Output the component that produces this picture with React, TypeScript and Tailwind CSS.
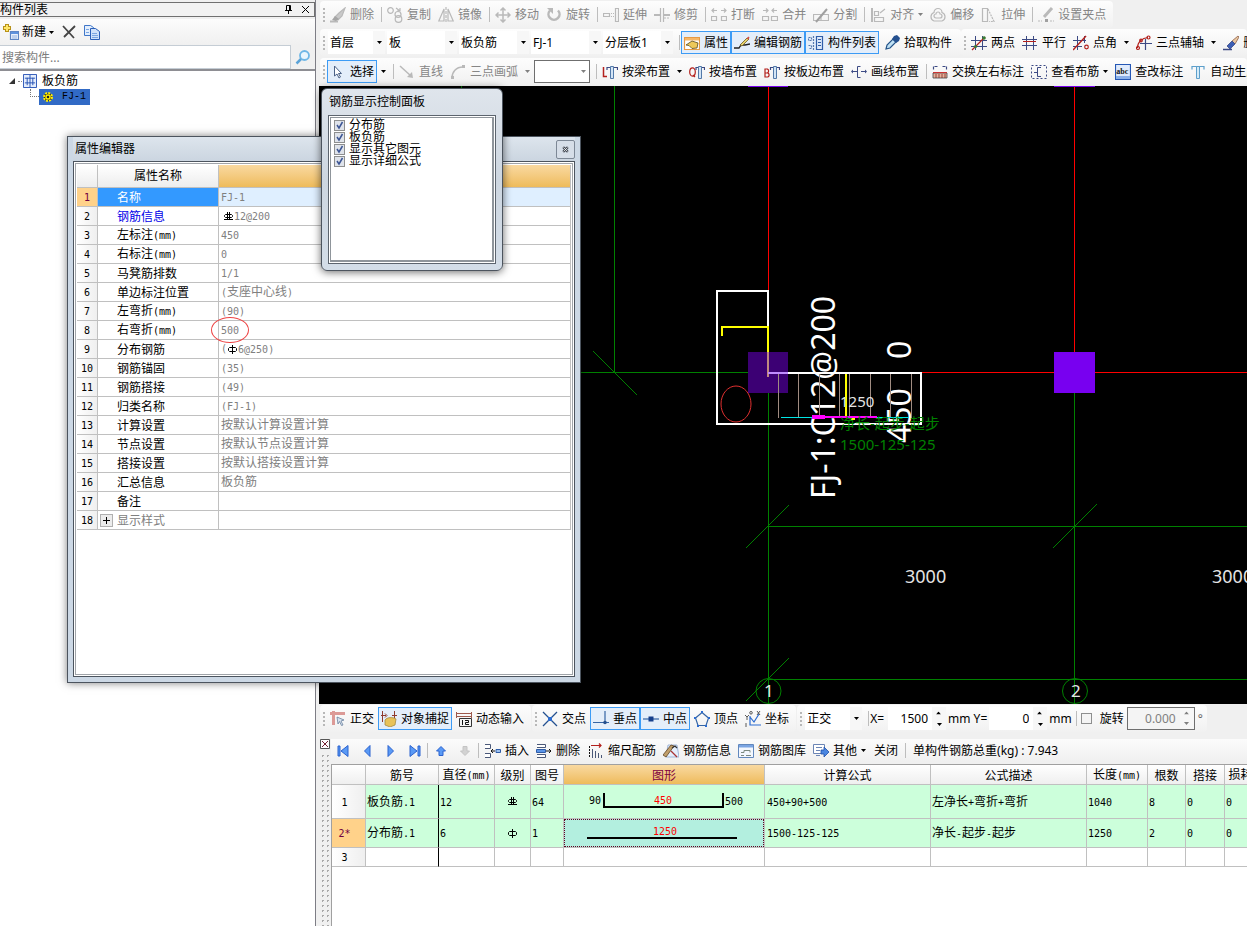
import React, { useState } from "react";

/* ---------- text helpers ---------- */

function Mixed({ text }: { text: string }) {
  const parts = text.split(/([\x20-\x7e]+)/).filter(Boolean);
  return (
    <>
      {parts.map((p, i) =>
        /^[\x20-\x7e]+$/.test(p) ? (
          <span key={i} className="font-['DejaVu_Sans_Mono',monospace] text-[10px]">{p}</span>
        ) : (
          <React.Fragment key={i}>{p}</React.Fragment>
        )
      )}
    </>
  );
}

function Rebar({ level }: { level: 1 | 3 }) {
  return (
    <svg width="11" height="11" viewBox="0 0 11 11" fill="none" stroke="#000" className="inline-block shrink-0" role="img" aria-label={level === 1 ? "一级钢" : "三级钢"}>
      {level === 1 ? (
        <path d="M2.500 3.500h6l1 1v2l-1 1h-6l-1-1v-2zM5.500 1v9" />
      ) : (
        <path d="M2.500 3.500h6l1 1v1l-1 1h-6l-1-1v-1zM4.500 1v8M6.500 1v8M1 8.500h9" />
      )}
    </svg>
  );
}

/* ---------- icons ---------- */

function I({ children, size = 16 }: { children: React.ReactNode; size?: number }) {
  return (
    <svg width={size} height={size} viewBox="0 0 16 16" fill="none" strokeWidth="1.2" className="shrink-0" aria-hidden="true">
      {children}
    </svg>
  );
}

const G = "#b9b9b9";
const B = "#2f5da8";
const N = "#3c4a84";
const R = "#b3201c";

const ic = {
  erase: <I><path d="M0 14.500h8" stroke={G} strokeWidth="2" /><path d="M15 1L9 6l-4 4 3 3 4-4z" fill="#c9c9c9" stroke={G} /><path d="M5 9l-3 4 4 1 3-2z" fill="#a5a5a5" /></I>,
  copy: <I><circle cx="3.500" cy="3.500" r="2.800" stroke={G} /><circle cx="11" cy="7.500" r="3" stroke={G} /><circle cx="11.500" cy="12" r="3.300" stroke={G} /><path d="M9 1l4 3M13 1v3h-3" stroke={G} /></I>,
  mirror: <I><path d="M6 2v12H0.800zM10 2v12h5.200z" stroke={G} /><path d="M8 0v16" stroke={G} strokeDasharray="3 1" /></I>,
  move: <I><path d="M8 1v14M1 8h14M5.500 3.500L8 1l2.500 2.500M5.500 12.500L8 15l2.500-2.500M3.500 5.500L1 8l2.500 2.500M12.500 5.500L15 8l-2.500 2.500" stroke={G} strokeWidth="1.500" /></I>,
  rotate: <I><path d="M4 3.500a5.500 5.500 0 1 0 8 0" stroke={G} strokeWidth="2.500" /><path d="M1 1h6v6z" fill={G} /></I>,
  extend: <I><path d="M.500 6.500h6v3h-6z" stroke={G} /><path d="M8 6.500h3M8 9.500h3" stroke={G} strokeDasharray="1 1" /><path d="M12.500 1.500h3v13h-3z" stroke={G} /></I>,
  trim: <I><path d="M0 8h6M10 8h6" stroke={G} strokeWidth="2" /><path d="M6.500 1v14M9.500 1v14" stroke={G} /><path d="M10 11h6" stroke={G} strokeDasharray="2 1" /></I>,
  brk: <I><path d="M1 3.500h5M3 1.500l-2 2 2 2M10 3.500h5M13 1.500l2 2-2 2M.500 9.500h5v4h-5zM10.500 9.500h5v4h-5z" stroke={G} /></I>,
  join: <I><path d="M1 3.500h5M4 1.500l2 2-2 2M15 3.500h-5M12 1.500l-2 2 2 2M.500 9.500h6v4h-6zM9.500 9.500h6v4h-6z" stroke={G} /></I>,
  split: <I><path d="M.500 7.500h15v6H.500zM8 7v6" stroke={G} /><path d="M3 15L14 2" stroke="#a0a0a0" strokeWidth="2" /></I>,
  align: <I><path d="M2 1v14" stroke={G} strokeWidth="2" /><path d="M4.500 4.500h4v4h-4zM4.500 10.500h9v4h-9zM15 2l-5 4" stroke={G} /></I>,
  offset: <I><path d="M8 1.500a4 4 0 0 1 4 4 4.500 4.500 0 0 1 0 8.500H4a4.500 4.500 0 0 1 0-8.500 4 4 0 0 1 4-4z" stroke={G} /><path d="M8 5a2 2 0 0 1 2 2 2 2 0 0 1 0 4H6a2 2 0 0 1 0-4 2 2 0 0 1 2-2z" stroke={G} /></I>,
  stretch: <I><path d="M1.500 1.500h5v13h-5z" stroke={G} /><path d="M7 2l6 12.500H8" stroke={G} strokeDasharray="2 1" /></I>,
  grip: <I><path d="M0 14h4M12 14h4" stroke={G} strokeDasharray="2 1" /><path d="M7 12h3v3H7z" fill="#a0a0a0" /><path d="M14 1L6 10" stroke={G} strokeWidth="3" /></I>,
  props: <I><path d="M.500 2.500h15v12H.500z" fill="#fff" stroke="#e69a45" /><path d="M1 3h14v2.500H1z" fill="#f7b768" /><path d="M2 10l6-4 6 2-1 5-5 .500-3-3z" fill="#edc85a" stroke="#5b4a20" strokeWidth=".8" /></I>,
  pencil: <I><path d="M0 13h5l2-3h4l5-1" stroke="#222" strokeWidth="1.300" /><path d="M6 10l7-7 2 1-7 7z" fill="#e6d36c" stroke="#6d5b22" strokeWidth=".8" /><path d="M12.500 3.500l2 1 1-2-1-1z" fill="#d34b42" /></I>,
  list: <I><path d="M.500 2.500h3v3h-3zM.500 10.500h3v3h-3M5.500 1v14" stroke="#5579ae" strokeDasharray="2 1" /><path d="M8.500 1.500h6v13h-6z" fill="#dce9fa" stroke={B} /><path d="M10 4.500h3M10 7.500h3M10 10.500h3" stroke={B} /></I>,
  picker: <I><path d="M2 14l1-4 6-6 3 3-6 6-4 1z" fill="#bfe0f4" stroke="#245489" /><path d="M8 4l2-3 3-1 3 3-1 3-3 2z" fill="#24508f" /></I>,
  axis2: <I><path d="M0 5.500h16M0 11.500h16M4.500 1v14M11.500 1v14" stroke={N} strokeWidth="1" /><path d="M1 15L14 2" stroke={R} /><circle cx="4.500" cy="11.500" r="1.600" fill="#3a7d35" /><circle cx="13" cy="3" r="1.800" fill="#3a7d35" /></I>,
  parallel: <I><path d="M4.500 1v14M11.500 1v14M0 4.500h15M0 10.500h15" stroke={N} strokeWidth="1" /><path d="M1 6.500h13" stroke={R} strokeWidth="1" /></I>,
  angle: <I><path d="M0 5.500h13M0 11.500h9M4.500 1v14M11.500 1v7" stroke={N} strokeWidth="1" /><path d="M0 15L13 1" stroke={R} strokeWidth="1.500" /><circle cx="13.500" cy="12" r="1.800" stroke={R} /></I>,
  arcAxis: <I><path d="M9.500 4v11M4 8.500h12" stroke={N} /><path d="M1.500 13C1.500 7 6 3 12 2.500" stroke={R} /><circle cx="2" cy="13" r="1.500" stroke={R} /><circle cx="12.500" cy="2.500" r="1.500" stroke={R} /><circle cx="5" cy="5.500" r="1.300" stroke={R} /></I>,
  brush: <I><path d="M0 14.500h9" stroke={N} strokeWidth="1.500" /><path d="M15 1L9 6l3 3 4-7z" fill="#e9c7a1" stroke="#8f6048" strokeWidth=".8" /><path d="M9 6l-5 5 3 3 5-5z" fill="#3d5fb5" stroke={N} strokeWidth=".8" /></I>,
  cursor: <I><path d="M4.500 2v10l2.500-2 2 4 1.500-1-2-3.500h3z" fill="#fff" stroke="#4b6186" strokeWidth="1" /></I>,
  line: <I><path d="M1 2l11 10" stroke={G} strokeWidth="1.500" /><path d="M14 14l-6-1 5-5z" fill={G} /></I>,
  arc: <I><path d="M2 14C2 8 6 3 13 3" stroke={G} strokeWidth="1.500" /><path d="M1 12h3v3H1zM12 1h3v3h-3z" fill={G} /></I>,
  beam: <I><path d="M1.500 3v9.500H5" stroke={R} strokeWidth="1.500" /><path d="M5 6V3.500h10.500V6" stroke={N} /><path d="M8.500 2.500h3v12h-3z" fill="#d4e5f5" stroke="#5279a9" strokeWidth="1" /></I>,
  wall: <I><ellipse cx="3.500" cy="8" rx="2.800" ry="4.200" stroke={R} /><path d="M4 11l2 2" stroke={R} /><path d="M7 6V3.500h8.500V6" stroke={N} /><path d="M9.500 2.500h3v12h-3z" fill="#d4e5f5" stroke="#5279a9" strokeWidth="1" /></I>,
  slab: <I><path d="M1 5h2.500l1 1v2l-1 1H1h3l1 1v2l-1 1H1z" stroke={R} /><path d="M6.500 6V3.500h9V6" stroke={N} /><path d="M9.500 2.500h3v12h-3z" fill="#d4e5f5" stroke="#5279a9" strokeWidth="1" /></I>,
  drawLine: <I><path d="M1 7.500h5M10 7.500h5M9.500 2.500h-3v11h3" stroke={N} strokeWidth="1" /><path d="M0 7.500l2-2v4zM16 7.500l-2-2v4z" fill={N} /></I>,
  swap: <I><path d="M1.500 5.500v-3h4M14.500 5.500v-3h-4" stroke={N} strokeDasharray="3 1" /><path d="M1 9h14v5H1z" fill="#e8b09b" stroke="#444" strokeWidth=".8" /><path d="M4 10v4M7 10v4M10 10v4M13 10v4" stroke="#7d2b22" strokeWidth=".8" /><path d="M1 8.500h14" stroke="#c33" /></I>,
  viewBar: <I><path d="M.500 1.500h15v13H.500z" stroke={N} strokeDasharray="2 2" strokeWidth="1" /><path d="M10 3.500H6.500v9H10M6 8.500H3" stroke={N} strokeWidth="1" /></I>,
  abc: <I><path d="M.500 .500h15v15H.500z" fill="#dfeafb" stroke="#2457b5" /><path d="M1 12h14v3H1z" fill="#8ab0e8" /><text x="1.200" y="9.500" fontSize="8" fontFamily="Liberation Serif, serif" fontWeight="bold" fill="#111">abc</text></I>,
  auto: <I><path d="M2 5.500v-3h12v3" stroke="#5d9fcb" /><path d="M6.500 2.500h3v12h-3z" fill="#d4ebf8" stroke="#5d9fcb" strokeWidth="1" /></I>,
  ortho: <I><path d="M0 2.500h15M3.500 0v14" stroke="#dc9a97" strokeWidth="3" /><path d="M7 6l7 3-3 1 2 4-1.500.500-2-4L8 13z" fill="#d9e3ee" stroke="#6a829f" strokeWidth=".8" /></I>,
  snap: <I><path d="M1.500 0v11M13.500 0v9M0 4.500h5M4 2.500l2 2-2 2M16 4.500h-5" stroke="#8e3a2d" strokeWidth="1" /><path d="M4 9c2-3 8-3 11-1l-1 6-5 2-5-2z" fill="#e8c35a" stroke="#a58a42" strokeWidth=".8" /></I>,
  dyn: <I><path d="M.500 1v6M15.500 1v6M0 2.500h16M0 5.500h16" stroke="#9e5a4d" strokeWidth="1" /><path d="M3.500 7.500h12v8h-12z" fill="#f4f4f4" stroke="#333" strokeWidth="1" /><path d="M6.500 9v5M9 9.500h3.500v2H9.500v2H13" stroke="#111" strokeWidth="1" /></I>,
  cross: <I><path d="M1 1l14 14M15 1L1 15" stroke="#24508f" strokeWidth="1.300" /><path d="M6 6h4v4H6z" fill="#2c6cd0" /></I>,
  perp: <I><path d="M0 11.500h16M12 0v12" stroke="#3565a5" /><circle cx="12" cy="11.500" r="1.800" fill="#24508f" /></I>,
  mid: <I><path d="M0 8h16" stroke="#3565a5" /><path d="M5.500 5.500h5v5h-5z" fill="#163f8c" /></I>,
  vertex: <I><path d="M8 1.500L14.500 7 12 14.500H4L1.500 7z" stroke="#3565a5" /><path d="M7 0h2v2H7zM0 6h2v2H0zM14 6h2v2h-2zM3 14h2v2H3zM11 14h2v2h-2z" fill="#2c6cd0" /></I>,
  coord: <I><path d="M5 5v9h11M5 6l4 5 5-8" stroke="#2c6cd0" /><circle cx="6" cy="1.800" r="1.300" stroke="#333" strokeWidth=".8" /><path d="M0 4l2 2 2-2M2 6v3M12 0l3 4M15 0l-3 4M1 12v4" stroke="#333" strokeWidth=".8" /></I>,
  insert: <I><path d="M0 1.500h5.500v4H0M0 10.500h5.500v4H0" fill="#fff" stroke="#4a5878" strokeWidth="1" /><path d="M6 8h4M8 6L6 8l2 2" stroke="#111" strokeWidth="1" /><path d="M11 6.500h4.500v3H11z" fill="#9cc0ef" stroke={B} strokeWidth="1" /></I>,
  del: <I><path d="M1 1.500h8.500v3H1M1 11.500h8.500v3H1" fill="#fff" stroke="#4a5878" strokeWidth="1" /><path d="M.500 6.500h9v3h-9z" fill="#5b95e8" stroke={B} strokeWidth="1" /><path d="M10 8h5M13 6l2 2-2 2" stroke="#111" strokeWidth="1" /></I>,
  scale: <I><path d="M1.500 3v12" stroke="#111" strokeDasharray="2 1" strokeWidth="1" /><path d="M3 2.500h10M11 .500l2 2-2 2" stroke={R} /><path d="M4.500 6v9M7.500 8v7M10.500 10v5M13.500 12v3" stroke="#4a5878" strokeWidth="1" /></I>,
  info: <I><path d="M5 2h9l2 12H3z" fill="#e4eefc" stroke="#8da6cf" strokeWidth=".8" /><path d="M0 12L8 2l3 1-8 11z" fill="#c2a06b" stroke="#5f4422" strokeWidth=".8" /><path d="M8 8l6 6" stroke="#a33" /><path d="M9 5l3-2 2 2" stroke="#333" /></I>,
  lib: <I><path d="M.500 1.500h15v13H.500z" fill="#f3f7fe" stroke="#6288bd" strokeWidth="1" /><path d="M1 2h14v2.500H1z" fill="#7ba5e3" /><path d="M3 9.500h3v-2h6v2M3 12.500h3M8 12.500h5" stroke="#7c8a80" strokeWidth="1" /></I>,
  other: <I><path d="M.500 1.500h11v9H.500z" fill="#fff" stroke="#6b85b5" strokeWidth="1" /><path d="M3 4.500h6M3 7.500h4M3 12.500h4" stroke="#6b85b5" strokeWidth="1" /><path d="M8 7h3V4l5 5-5 5v-3H8z" fill="#4a86e0" stroke="#1f4fa8" strokeWidth=".8" /></I>,
  first: <I><path d="M3 3h2v10H3zM13 2.500v11L6 8z" fill="#5a9af5" stroke="#2b62cf" strokeWidth="1" /></I>,
  prev: <I><path d="M11 2.500v11L5.500 8z" fill="#5a9af5" stroke="#2b62cf" strokeWidth="1" /></I>,
  next: <I><path d="M5 2.500v11L10.500 8z" fill="#5a9af5" stroke="#2b62cf" strokeWidth="1" /></I>,
  last: <I><path d="M11 3h2v10h-2zM3 2.500v11L10 8z" fill="#5a9af5" stroke="#2b62cf" strokeWidth="1" /></I>,
  up: <I><path d="M8 3.500L12.500 8H10v4.500H6V8H3.500z" fill="#5a9af5" stroke="#2b62cf" strokeWidth="1" /></I>,
  down: <I><path d="M8 12.500L12.500 8H10V3.500H6V8H3.500z" fill="#d2d2d2" stroke="#c4c4c4" strokeWidth="1" /></I>,
  newItem: <I><path d="M4 0v8M0 4h8" stroke="#b8921a" strokeWidth="4" /><path d="M4 1v6M1 4h6" stroke="#ffe76a" strokeWidth="2" /><path d="M7.500 7.500h8v8h-8z" fill="#eaf2fd" stroke="#5d86c4" /><path d="M8 8h7v2H8z" fill="#5d92dd" /><path d="M9 12h5M9 14h5" stroke="#8fb0de" /></I>,
  close: <I><path d="M2 2l11 12M14 2L3 13" stroke="#444" strokeWidth="1.800" /></I>,
  copyBlue: <I><path d="M.500 1.500h6l3 2v8h-9z" fill="#e2eefd" stroke="#3f76c8" strokeWidth="1" /><path d="M6.500 4.500h5l4 3v8h-9z" fill="#cfe1fa" stroke="#2b5fb8" strokeWidth="1" /><path d="M2 5.500h3M2 8.500h3M8 9.500h5M8 11.500h6M8 13.500h6" stroke="#7aa5e2" strokeWidth="1" /></I>,
  search: <I><circle cx="9.500" cy="6.500" r="4.500" stroke="#6db6e6" strokeWidth="1.800" fill="#e8f5fd" /><path d="M6 10l-4.500 4.500" stroke="#5ba3d8" strokeWidth="2.500" /></I>,
};

/* ---------- toolbar parts ---------- */

function Caret({ grey = false }: { grey?: boolean }) {
  return (
    <svg width="5" height="3" viewBox="0 0 5 3" className="shrink-0" aria-hidden="true">
      <path d="M0 0h5L2.500 3z" fill={grey ? "#808080" : "#000"} />
    </svg>
  );
}

type ToolProps = { icon?: React.ReactNode; text: string; off?: boolean; on?: boolean; menu?: boolean };

function Tool({ icon, text, off, on, menu }: ToolProps) {
  return (
    <button
      type="button"
      disabled={off}
      aria-pressed={on}
      className={`flex h-[23px] shrink-0 items-center gap-1 whitespace-nowrap ${on ? "border border-[#3c9bf5] bg-[#e4eefa] px-[2px]" : "pr-[3px] pl-1"} ${off ? "text-[#868686]" : "text-black"}`}
    >
      {icon}
      <span>{text}</span>
      {menu && <Caret grey={off} />}
    </button>
  );
}

function Drop({ label, off }: { label: string; off?: boolean }) {
  return (
    <button type="button" disabled={off} aria-label={label} className="flex h-[23px] w-3 shrink-0 items-center justify-center">
      <Caret grey={off} />
    </button>
  );
}

const Sep = () => <div className="mr-px ml-1 h-[15px] w-px shrink-0 bg-[#bdbdbd]" />;
const Grip = () => (
  <div className="mr-px h-[14px] w-[2px] shrink-0 bg-[repeating-linear-gradient(to_bottom,#b8b8b8_0_2px,transparent_2px_4px)]" />
);

function Bar({ children, grow }: { children: React.ReactNode; grow?: boolean }) {
  return (
    <div className={`flex h-[27px] shrink-0 items-center rounded-sm bg-linear-to-b from-[#fdfdfd] to-[#f1f1f1] pr-1 pl-[3px] ${grow ? "min-w-0 flex-1 overflow-hidden" : ""}`}>
      {children}
    </div>
  );
}

function Combo({ label, value, width, off }: { label: string; value: string; width: string; off?: boolean }) {
  return (
    <span className={`relative mr-[2px] flex h-[23px] shrink-0 items-center bg-white ${width} ${off ? "border border-[#6f6f6f] bg-[#f7f7f7]" : ""}`}>
      <select aria-label={label} disabled={off} defaultValue={value} className="h-full w-full appearance-none bg-transparent pl-[2px] outline-none">
        <option>{value}</option>
      </select>
      <span className={`pointer-events-none absolute inset-y-0 right-0 flex w-3 items-center justify-center ${off ? "" : "bg-[#f7f7f7]"}`}>
        <Caret grey={off} />
      </span>
    </span>
  );
}

function Spin({ label, value, off }: { label: string; value: string; off?: boolean }) {
  return (
    <span className={`flex h-[23px] shrink-0 items-stretch ${off ? "w-[68px] border border-[#6f6f6f] bg-[#f4f4f4] text-[#808080]" : "w-[58px] bg-white"}`}>
      <input aria-label={label} disabled={off} defaultValue={value} className="w-full min-w-0 bg-transparent pr-1 text-right outline-none" />
      <span className="flex w-[14px] shrink-0 flex-col bg-[#f7f7f7]">
        <button type="button" disabled={off} aria-label={`${label} 增加`} className="flex flex-1 rotate-180 items-center justify-center"><Caret grey={off} /></button>
        <button type="button" disabled={off} aria-label={`${label} 减少`} className="flex flex-1 items-center justify-center"><Caret grey={off} /></button>
      </span>
    </span>
  );
}

/* ---------- left component list ---------- */

function ComponentList() {
  return (
    <aside className="flex w-[316px] shrink-0 flex-col border-r border-[#7d7d85] bg-white">
      <div className="bg-[#f0f0f0] pt-[2px] pb-[2px]">
        <header className="flex h-[15px] items-center border border-l-0 border-[#707070] bg-[#f2f2f2] leading-none">
          <h2 className="flex-1 text-[12px]">构件列表</h2>
          <button type="button" aria-label="固定" className="mr-2">
            <svg width="9" height="9" viewBox="0 0 9 9" fill="none" stroke="#000"><path d="M2.500 5V.5h4V5M5.500 1v4M1 5.500h7M4.500 6v3" /></svg>
          </button>
          <button type="button" aria-label="关闭列表" className="mr-1">
            <svg width="9" height="9" viewBox="0 0 9 9" stroke="#000"><path d="M1 1l7 7M8 1L1 8" /></svg>
          </button>
        </header>
      </div>
      <div className="flex h-[26px] items-center bg-linear-to-b from-[#fcfcfc] to-[#f0f0f0] pl-[3px]">
        <button type="button" className="flex items-center gap-[3px]">{ic.newItem}<span>新建</span><Caret /></button>
        <button type="button" aria-label="删除构件" className="ml-[7px]">{ic.close}</button>
        <button type="button" aria-label="复制构件" className="ml-[7px]">{ic.copyBlue}</button>
      </div>
      <div className="flex h-[26px] items-center border-b-2 border-[#8e8e93] bg-[#f0f0f0]">
        <input aria-label="搜索构件" placeholder="搜索构件..." className="h-full min-w-0 flex-1 border border-l-0 border-[#c5cdd5] bg-white pl-[2px] outline-none placeholder:text-[#7c7c7c]" />
        <button type="button" aria-label="搜索" className="flex w-6 justify-center">{ic.search}</button>
      </div>
      <ul className="pt-[2px] leading-4">
        <li>
          <div className="flex h-4 items-center pl-2">
            <svg width="8" height="8" viewBox="0 0 8 8" aria-hidden="true"><path d="M7 1v6H1z" fill="#333" /></svg>
            <span className="ml-[2px] w-[4px] border-t border-dotted border-[#888]" />
            <svg width="14" height="14" viewBox="0 0 15 15" fill="none" stroke="#2450b4" className="ml-px" aria-hidden="true">
              <path d="M.5 .5h14v14H.5z" fill="#e5eefc" /><path d="M2 4.500h11M2 9.500h11M4.500 4v8M10.500 4v8M7.500 1v13" />
            </svg>
            <span className="ml-[5px]">板负筋</span>
          </div>
          <ul>
            <li className="flex h-4 items-start pl-[30px]">
              <span className="h-2 w-[9px] shrink-0 border-b border-l border-dotted border-[#777]" />
              <button type="button" className="flex h-4 w-[51px] items-center bg-[#316ac5] pl-[3px] font-['Liberation_Mono',monospace] text-[10px]">
                <svg width="12" height="12" viewBox="0 0 12 12" fill="none" stroke="#ffee00" aria-hidden="true">
                  <circle cx="6" cy="6" r="4" fill="#222" strokeWidth="2" strokeDasharray="2 1.100" /><circle cx="6" cy="6" r="2" strokeWidth="1.500" />
                </svg>
                <span className="ml-2">FJ-1</span>
              </button>
            </li>
          </ul>
        </li>
      </ul>
    </aside>
  );
}

/* ---------- top toolbars ---------- */

function TopToolbars() {
  return (
    <div className="flex flex-col gap-px overflow-hidden py-px pl-px">
      <div className="flex">
        <Bar>
          <Grip />
          <Tool off icon={ic.erase} text="删除" /><Sep />
          <Tool off icon={ic.copy} text="复制" /><Tool off icon={ic.mirror} text="镜像" /><Sep />
          <Tool off icon={ic.move} text="移动" /><Tool off icon={ic.rotate} text="旋转" /><Sep />
          <Tool off icon={ic.extend} text="延伸" /><Tool off icon={ic.trim} text="修剪" /><Sep />
          <Tool off icon={ic.brk} text="打断" /><Tool off icon={ic.join} text="合并" /><Tool off icon={ic.split} text="分割" /><Sep />
          <Tool off menu icon={ic.align} text="对齐" /><Tool off icon={ic.offset} text="偏移" /><Tool off icon={ic.stretch} text="拉伸" /><Sep />
          <Tool off icon={ic.grip} text="设置夹点" />
        </Bar>
      </div>
      <div className="flex">
        <Bar>
          <Grip />
          <span className="w-[2px] shrink-0" />
          <Combo label="楼层" value="首层" width="w-[57px]" />
          <Combo label="构件类型" value="板" width="w-[70px]" />
          <Combo label="构件种类" value="板负筋" width="w-[70px]" />
          <Combo label="构件" value="FJ-1" width="w-[70px]" />
          <Combo label="分层板" value="分层板1" width="w-[70px]" />
          <Sep />
          <Tool on icon={ic.props} text="属性" /><Tool on icon={ic.pencil} text="编辑钢筋" /><Tool on icon={ic.list} text="构件列表" />
          <span className="w-px shrink-0" />
          <Tool icon={ic.picker} text="拾取构件" />
          <span className="w-[2px] shrink-0" />
        </Bar>
        <Bar grow>
          <Grip />
          <Tool icon={ic.axis2} text="两点" /><Tool icon={ic.parallel} text="平行" />
          <Tool icon={ic.angle} text="点角" /><Drop label="点角选项" />
          <Tool icon={ic.arcAxis} text="三点辅轴" /><Drop label="三点辅轴选项" />
          <Tool icon={ic.brush} text="删除辅轴" />
        </Bar>
      </div>
      <div className="flex pt-px">
        <Bar grow>
          <Grip />
          <span className="w-px shrink-0" />
          <Tool on icon={ic.cursor} text="选择" /><Drop label="选择选项" /><Sep />
          <Tool off icon={ic.line} text="直线" />
          <Tool off icon={ic.arc} text="三点画弧" /><Drop off label="画弧选项" />
          <span className="w-px shrink-0" />
          <Combo off label="画法" value="" width="w-[56px]" /><Sep />
          <Tool icon={ic.beam} text="按梁布置" /><Drop label="按梁布置选项" />
          <Tool icon={ic.wall} text="按墙布置" /><Tool icon={ic.slab} text="按板边布置" /><Tool icon={ic.drawLine} text="画线布置" /><Sep />
          <Tool icon={ic.swap} text="交换左右标注" /><Tool menu icon={ic.viewBar} text="查看布筋" />
          <Tool icon={ic.abc} text="查改标注" /><Tool icon={ic.auto} text="自动生成负筋" />
        </Bar>
      </div>
    </div>
  );
}

/* ---------- drawing canvas ---------- */

function Drawing() {
  return (
    <div className="min-h-0 flex-1 overflow-hidden bg-black">
      <svg width="100%" height="100%" fontFamily="'Noto Sans', 'Noto Sans CJK SC', sans-serif" role="img" aria-label="板负筋平面图">
        <g transform="translate(-319 -86)" fill="none">
          <g stroke="#008000">
            <path d="M461.500 86V372M614.500 86V372M320 372.500H768M768.500 393V704M1074.500 393V704M768 526.500H2400M768 679.500H2400" />
            <path d="M593 351l44 44M746 548l43-43M1053 548l44-44M746 701l43-43" />
            <circle cx="768.500" cy="691" r="12.500" />
            <circle cx="1075" cy="691" r="12.500" />
          </g>
          <path d="M768.500 86V352M1074.500 86V352M921 372.500H2400" stroke="#f00" />
          <path d="M748 86h40v1h-40zM1054 86h41v1h-41zM1054 352h41v41h-41z" fill="#7800f0" />
          <path d="M768 352V291H717V424H921V373H788" stroke="#fff" strokeWidth="2" />
          <path d="M722 336V327H768V352" stroke="#ff0" strokeWidth="2" />
          <path d="M748 352h40v41h-40z" fill="#3c0074" />
          <path d="M768 352V377" stroke="#c08a80" strokeWidth="2" />
          <path d="M768 373H788" stroke="#c08cff" strokeWidth="2" />
          <g fill="#fff">
            <text transform="translate(835 499) rotate(-90)" fontSize="32">FJ-1:C12@200</text>
            <text transform="translate(911 443) rotate(-90)" fontSize="32">450</text>
            <text transform="translate(911 359) rotate(-90)" fontSize="32">0</text>
          </g>
          <path d="M778.500 374V418M798.500 374V418M819.500 374V418M839.500 374V418M849.500 374V418M870.500 374V418M890.500 374V418M911.500 374V418" stroke="#a08c82" />
          <path d="M781 417.500H909" stroke="#00e5e5" />
          <path d="M846 374V418" stroke="#ff0" strokeWidth="2" />
          <text x="840" y="407" fontSize="15" fill="#e4e4e4">1250</text>
          <path d="M812 417H877" stroke="#f0f" strokeWidth="2" />
          <path d="M812 415h13v4h-13z" fill="#f0f" />
          <path d="M851 418h4v2h-4z" fill="#ff0" />
          <ellipse cx="736" cy="404" rx="15" ry="18" stroke="#e03030" />
          <g fill="#008000" fontSize="15">
            <text x="840" y="429">净长-起步-起步</text>
            <text x="840" y="450">1500-125-125</text>
          </g>
          <g fill="#e4e4e4" fontSize="18">
            <text x="905" y="583">3000</text>
            <text x="1212" y="583">3000</text>
            <text x="764" y="697" fontSize="17">1</text>
            <text x="1071" y="697" fontSize="17">2</text>
          </g>
        </g>
      </svg>
    </div>
  );
}

/* ---------- snap bar ---------- */

function SnapBar() {
  return (
    <div className="flex h-[35px] shrink-0 overflow-hidden pt-px pl-px">
      <Bar>
        <Grip />
        <Tool icon={ic.ortho} text="正交" />
        <span className="w-px shrink-0" />
        <Tool on icon={ic.snap} text="对象捕捉" /><Tool icon={ic.dyn} text="动态输入" />
      </Bar>
      <div className="w-px shrink-0" />
      <Bar>
        <Grip />
        <Tool icon={ic.cross} text="交点" /><span className="w-px shrink-0" />
        <Tool on icon={ic.perp} text="垂点" /><Tool on icon={ic.mid} text="中点" />
        <Tool icon={ic.vertex} text="顶点" /><Tool icon={ic.coord} text="坐标" />
      </Bar>
      <div className="w-px shrink-0" />
      <Bar>
        <Grip />
        <span className="w-[2px] shrink-0" />
        <Combo label="偏移方式" value="正交" width="w-[57px]" /><Sep />
        <span className="pr-1">X=</span>
        <Spin label="X" value="1500" />
        <span className="px-[2px] whitespace-nowrap">mm Y=</span>
        <Spin label="Y" value="0" />
        <span className="pl-[2px]">mm</span>
        <Sep />
        <label className="flex shrink-0 items-center gap-2 px-[3px]">
          <input type="checkbox" className="h-[11px] w-[11px] appearance-none border border-[#8e8f8f] bg-[#f4f4f4]" />
          <span>旋转</span>
        </label>
        <Spin off label="旋转角度" value="0.000" />
        <span className="pl-[3px] text-[#666]">°</span>
      </Bar>
    </div>
  );
}

/* ---------- rebar editing table ---------- */

const heads: [string, string][] = [
  ["", "w-[34px]"], ["筋号", "w-[73px]"], ["直径(mm)", "w-[56px]"], ["级别", "w-[36px]"], ["图号", "w-[33px]"],
  ["图形", "w-[201px]"], ["计算公式", "w-[166px]"], ["公式描述", "w-[156px]"], ["长度(mm)", "w-[61px]"],
  ["根数", "w-[38px]"], ["搭接", "w-[39px]"], ["损耗(%)", "w-[50px]"],
];

const line = "border-r border-b border-[#c0c0c0]";
const mono = "font-['DejaVu_Sans_Mono',monospace]";

function NavButton({ label, icon, off }: { label: string; icon: React.ReactNode; off?: boolean }) {
  return <button type="button" aria-label={label} disabled={off} className="flex h-[23px] w-6 shrink-0 items-center justify-center">{icon}</button>;
}

type GridRow = { n: string; h: string; sel?: boolean; name: string; d: string; lv: 1 | 3; no: string; shape: React.ReactNode; f: string; desc: string; len: string; cnt: string };

const gridRows: GridRow[] = [
  {
    n: "1", h: "h-[34px]", name: "板负筋.1", d: "12", lv: 3, no: "64", f: "450+90+500", desc: "左净长+弯折+弯折", len: "1040", cnt: "8",
    shape: (
      <svg width="200" height="33" viewBox="0 0 200 33" className={`${mono} block text-[10px]`} role="img" aria-label="板负筋形状">
        <path d="M40 8v14h119V8" fill="none" stroke="#000" strokeWidth="2" />
        <text x="25" y="19">90</text><text x="90" y="19" fill="#f00">450</text><text x="161" y="20">500</text>
      </svg>
    ),
  },
  {
    n: "2*", h: "h-[29px]", sel: true, name: "分布筋.1", d: "6", lv: 1, no: "1", f: "1500-125-125", desc: "净长-起步-起步", len: "1250", cnt: "2",
    shape: (
      <svg width="198" height="26" viewBox="0 0 198 26" className={`${mono} block text-[10px]`} role="img" aria-label="分布筋形状">
        <path d="M22 18h150" stroke="#000" strokeWidth="2" />
        <text x="88" y="15" fill="#f00">1250</text>
      </svg>
    ),
  },
];

function RebarPanel() {
  return (
    <section className="flex h-[187px] shrink-0">
      <div className="flex w-3 shrink-0 flex-col items-center gap-1">
        <button type="button" aria-label="关闭面板">
          <svg width="10" height="10" viewBox="0 0 10 10" stroke="#555" fill="#fff"><path d="M.5 .5h9v9h-9z" /><path d="M2 2l6 6M8 2L2 8" stroke="#723" /></svg>
        </button>
        <div className="w-[10px] flex-1 bg-[radial-gradient(circle,#a8a8a8_1px,transparent_1px)] bg-[length:5px_5px]" />
      </div>
      <div className="flex min-w-0 flex-1 flex-col">
        <div className="mb-[2px] flex h-[23px] shrink-0 items-center overflow-hidden bg-linear-to-b from-[#fbfbfb] to-[#f0f0f0]">
          <NavButton label="首条" icon={ic.first} /><NavButton label="上一条" icon={ic.prev} />
          <NavButton label="下一条" icon={ic.next} /><NavButton label="末条" icon={ic.last} />
          <div className="mr-px h-[15px] w-px shrink-0 bg-[#bdbdbd]" />
          <NavButton label="上移" icon={ic.up} /><NavButton off label="下移" icon={ic.down} />
          <div className="mr-[2px] ml-px h-[15px] w-px shrink-0 bg-[#bdbdbd]" />
          <Tool icon={ic.insert} text="插入" /><Tool icon={ic.del} text="删除" /><span className="w-px shrink-0" /><Tool icon={ic.scale} text="缩尺配筋" />
          <Tool icon={ic.info} text="钢筋信息" /><Tool icon={ic.lib} text="钢筋图库" /><Tool menu icon={ic.other} text="其他" />
          <span className="w-px shrink-0" />
          <Tool text="关闭" /><Sep />
          <span className="pl-[6px] whitespace-nowrap">单构件钢筋总重(kg) : 7.943</span>
        </div>
        <div className="min-h-0 flex-1 overflow-hidden border-t border-l border-[#a0a0a0] bg-white">
          <table className="w-[943px] table-fixed border-separate border-spacing-0">
            <thead>
              <tr className="h-5">
                {heads.map(([h, w], i) => (
                  <th key={i} scope="col" className={`${w} ${line} p-0 pt-[2px] leading-4 font-normal whitespace-nowrap ${h === "图形" ? "bg-linear-to-b from-[#f9d9a0] to-[#eebb5a] text-[#800040]" : "bg-linear-to-b from-white to-[#efefef]"}`}>
                    <Mixed text={h} />
                  </th>
                ))}
              </tr>
            </thead>
            <tbody>
              {gridRows.map((r) => (
                <tr key={r.n} className={`${r.h} bg-[#ccffdb]`}>
                  <th scope="row" className={`${line} p-0 pr-2 font-normal ${r.sel ? "bg-[#ffd28a] text-[#700040]" : "bg-linear-to-r from-white to-[#efefef]"}`}><Mixed text={r.n} /></th>
                  <td className="border-r border-b border-r-black border-b-[#c0c0c0] p-0 pl-px"><Mixed text={r.name} /></td>
                  <td className={`${line} p-0 pl-px`}><Mixed text={r.d} /></td>
                  <td className={`${line} p-0`}><div className="flex items-center justify-center"><Rebar level={r.lv} /></div></td>
                  <td className={`${line} p-0 pl-px`}><Mixed text={r.no} /></td>
                  <td className={`${line} p-0`}><div className={r.sel ? "border border-dotted border-[#600020] bg-[#b3efdf]" : ""}>{r.shape}</div></td>
                  <td className={`${line} p-0 pl-[2px]`}><Mixed text={r.f} /></td>
                  <td className={`${line} p-0 pl-px`}><Mixed text={r.desc} /></td>
                  <td className={`${line} p-0 pl-px`}><Mixed text={r.len} /></td>
                  <td className={`${line} p-0 pl-px`}><Mixed text={r.cnt} /></td>
                  <td className={`${line} p-0 pl-px`}><Mixed text="0" /></td>
                  <td className={`${line} p-0 pl-px`}><Mixed text="0" /></td>
                </tr>
              ))}
              <tr className="h-[19px]">
                <th scope="row" className={`${line} bg-linear-to-r from-white to-[#efefef] p-0 pr-2 leading-4 font-normal`}><Mixed text="3" /></th>
                <td className="border-r border-b border-r-black border-b-[#c0c0c0] p-0" />
                {heads.slice(2).map(([h]) => <td key={h} className={`${line} p-0`} />)}
              </tr>
            </tbody>
          </table>
        </div>
      </div>
    </section>
  );
}

/* ---------- floating windows ---------- */

const props: [string, string][] = [
  ["名称", "FJ-1"], ["钢筋信息", "12@200"], ["左标注(mm)", "450"], ["右标注(mm)", "0"], ["马凳筋排数", "1/1"],
  ["单边标注位置", "(支座中心线)"], ["左弯折(mm)", "(90)"], ["右弯折(mm)", "500"], ["分布钢筋", "6@250)"],
  ["钢筋锚固", "(35)"], ["钢筋搭接", "(49)"], ["归类名称", "(FJ-1)"], ["计算设置", "按默认计算设置计算"],
  ["节点设置", "按默认节点设置计算"], ["搭接设置", "按默认搭接设置计算"], ["汇总信息", "板负筋"], ["备注", ""], ["显示样式", ""],
];

function PropertyWindow() {
  return (
    <section className="absolute top-[136px] left-[67px] flex h-[547px] w-[514px] flex-col border border-[#4c545e] bg-[#ccd8e5] px-[5px] pb-[5px] shadow-[0_0_8px_rgba(0,0,0,0.5)]">
      <header className="flex h-6 shrink-0 items-center justify-between bg-linear-to-b from-[#dde5ed] to-[#cbd5e0] pl-[2px]">
        <h2>属性编辑器</h2>
        <button type="button" aria-label="关闭属性编辑器" className="flex h-[19px] w-[19px] items-center justify-center rounded-[2px] border border-[#7d8896] bg-[#d6dee8]">
          <svg width="7" height="7" viewBox="0 0 9 9" aria-hidden="true"><path d="M1.500 1.500l6 6M7.500 1.500l-6 6" stroke="#444b55" strokeWidth="3" /><path d="M2 2l5 5M7 2L2 7" stroke="#fff" /></svg>
        </button>
      </header>
      <div className="min-h-0 flex-1 border border-[#4c545e] bg-white p-px">
        <div className="h-full border border-[#a0a4a9] p-px">
          <table className="w-full table-fixed border-separate border-spacing-0">
            <thead>
              <tr className="h-[23px]">
                <th className={`w-[21px] ${line} bg-linear-to-b from-white to-[#ededed] p-0`} />
                <th scope="col" className={`w-[121px] ${line} bg-linear-to-b from-white to-[#ededed] p-0 font-normal`}>属性名称</th>
                <th className={`${line} bg-linear-to-b from-[#f9d9a0] to-[#eebb5a] p-0`} />
              </tr>
            </thead>
            <tbody>
              {props.map(([name, val], i) => (
                <tr key={name} className="h-[19px] leading-4">
                  <td className={`${line} p-0 text-center ${i === 0 ? "bg-[#ffd28a] text-[#700040]" : "bg-linear-to-r from-white to-[#efefef]"}`}><Mixed text={String(i + 1)} /></td>
                  <th scope="row" className={`${line} p-0 pt-px text-left font-normal ${i === 0 ? "bg-[#3399ff] text-white" : i === 1 ? "text-[#0000e8]" : i === 17 ? "text-[#808080]" : ""}`}>
                    <div className="flex items-center">
                      <span className="flex w-[19px] justify-start pl-[2px]">
                        {i === 17 && (
                          <button type="button" aria-label="展开显示样式" className="flex h-[13px] w-[13px] items-center justify-center border border-[#b0b0b0] bg-[#ececec]">
                            <svg width="7" height="7" viewBox="0 0 7 7" stroke="#000"><path d="M0 3.500h7M3.500 0v7" /></svg>
                          </button>
                        )}
                      </span>
                      <span><Mixed text={name} /></span>
                    </div>
                  </th>
                  <td className={`${line} relative p-0 pl-[2px] text-[#808080] ${i === 0 ? "bg-[#dfefff]" : ""}`}>
                    <div className="flex items-center">
                      {i === 8 && <Mixed text="(" />}
                      {i === 1 && <span className="w-[2px]" />}
                      {(i === 1 || i === 8) && <Rebar level={i === 1 ? 3 : 1} />}
                      <span><Mixed text={val} /></span>
                    </div>
                    {i === 7 && <span className="pointer-events-none absolute -top-1 -left-2 h-[26px] w-[38px] rounded-[50%] border border-[#ee4444]" />}
                  </td>
                </tr>
              ))}
            </tbody>
          </table>
        </div>
      </div>
    </section>
  );
}

function DisplayWindow() {
  const [on, setOn] = useState([true, true, true, true]);
  return (
    <section className="absolute top-[88px] left-[321px] flex h-[183px] w-[182px] flex-col rounded-md border border-[#4c545e] bg-linear-to-b from-[#dfe5ec] via-[#cdd6e0] to-[#d3dde8] px-[6px] pb-[6px] shadow-[0_1px_8px_rgba(0,0,0,0.6)]">
      <h2 className="flex h-[26px] shrink-0 items-center pl-px">钢筋显示控制面板</h2>
      <div className="min-h-0 flex-1 border border-[#5c646e] bg-white p-px">
        <div className="h-full border border-r-2 border-b-2 border-[#8f959b] pt-px pl-[3px]">
          {["分布筋", "板负筋", "显示其它图元", "显示详细公式"].map((t, i) => (
            <label key={t} className="flex h-3 items-center gap-1 leading-3">
              <span className="relative flex h-[11px] w-[11px]">
                <input type="checkbox" checked={on[i]} onChange={() => setOn(on.map((v, k) => (k === i ? !v : v)))} className="h-[11px] w-[11px] appearance-none border border-[#8e8f8f] bg-[#dfe3ea]" />
                {on[i] && (
                  <svg width="11" height="11" viewBox="0 0 11 11" className="pointer-events-none absolute inset-0" aria-hidden="true"><path d="M3 5l2 3 3.500-6" fill="none" stroke="#3c5594" strokeWidth="1.500" /></svg>
                )}
              </span>
              <span>{t}</span>
            </label>
          ))}
        </div>
      </div>
    </section>
  );
}

export default function App() {
  return (
    <div className="relative flex h-screen w-full overflow-hidden bg-[#f0f0f0] font-['Noto_Sans','Noto_Sans_CJK_SC',sans-serif] text-[12px] text-black">
      <ComponentList />
      <main className="ml-[3px] flex min-w-0 flex-1 flex-col">
        <TopToolbars />
        <Drawing />
        <SnapBar />
        <RebarPanel />
      </main>
      <PropertyWindow />
      <DisplayWindow />
    </div>
  );
}
